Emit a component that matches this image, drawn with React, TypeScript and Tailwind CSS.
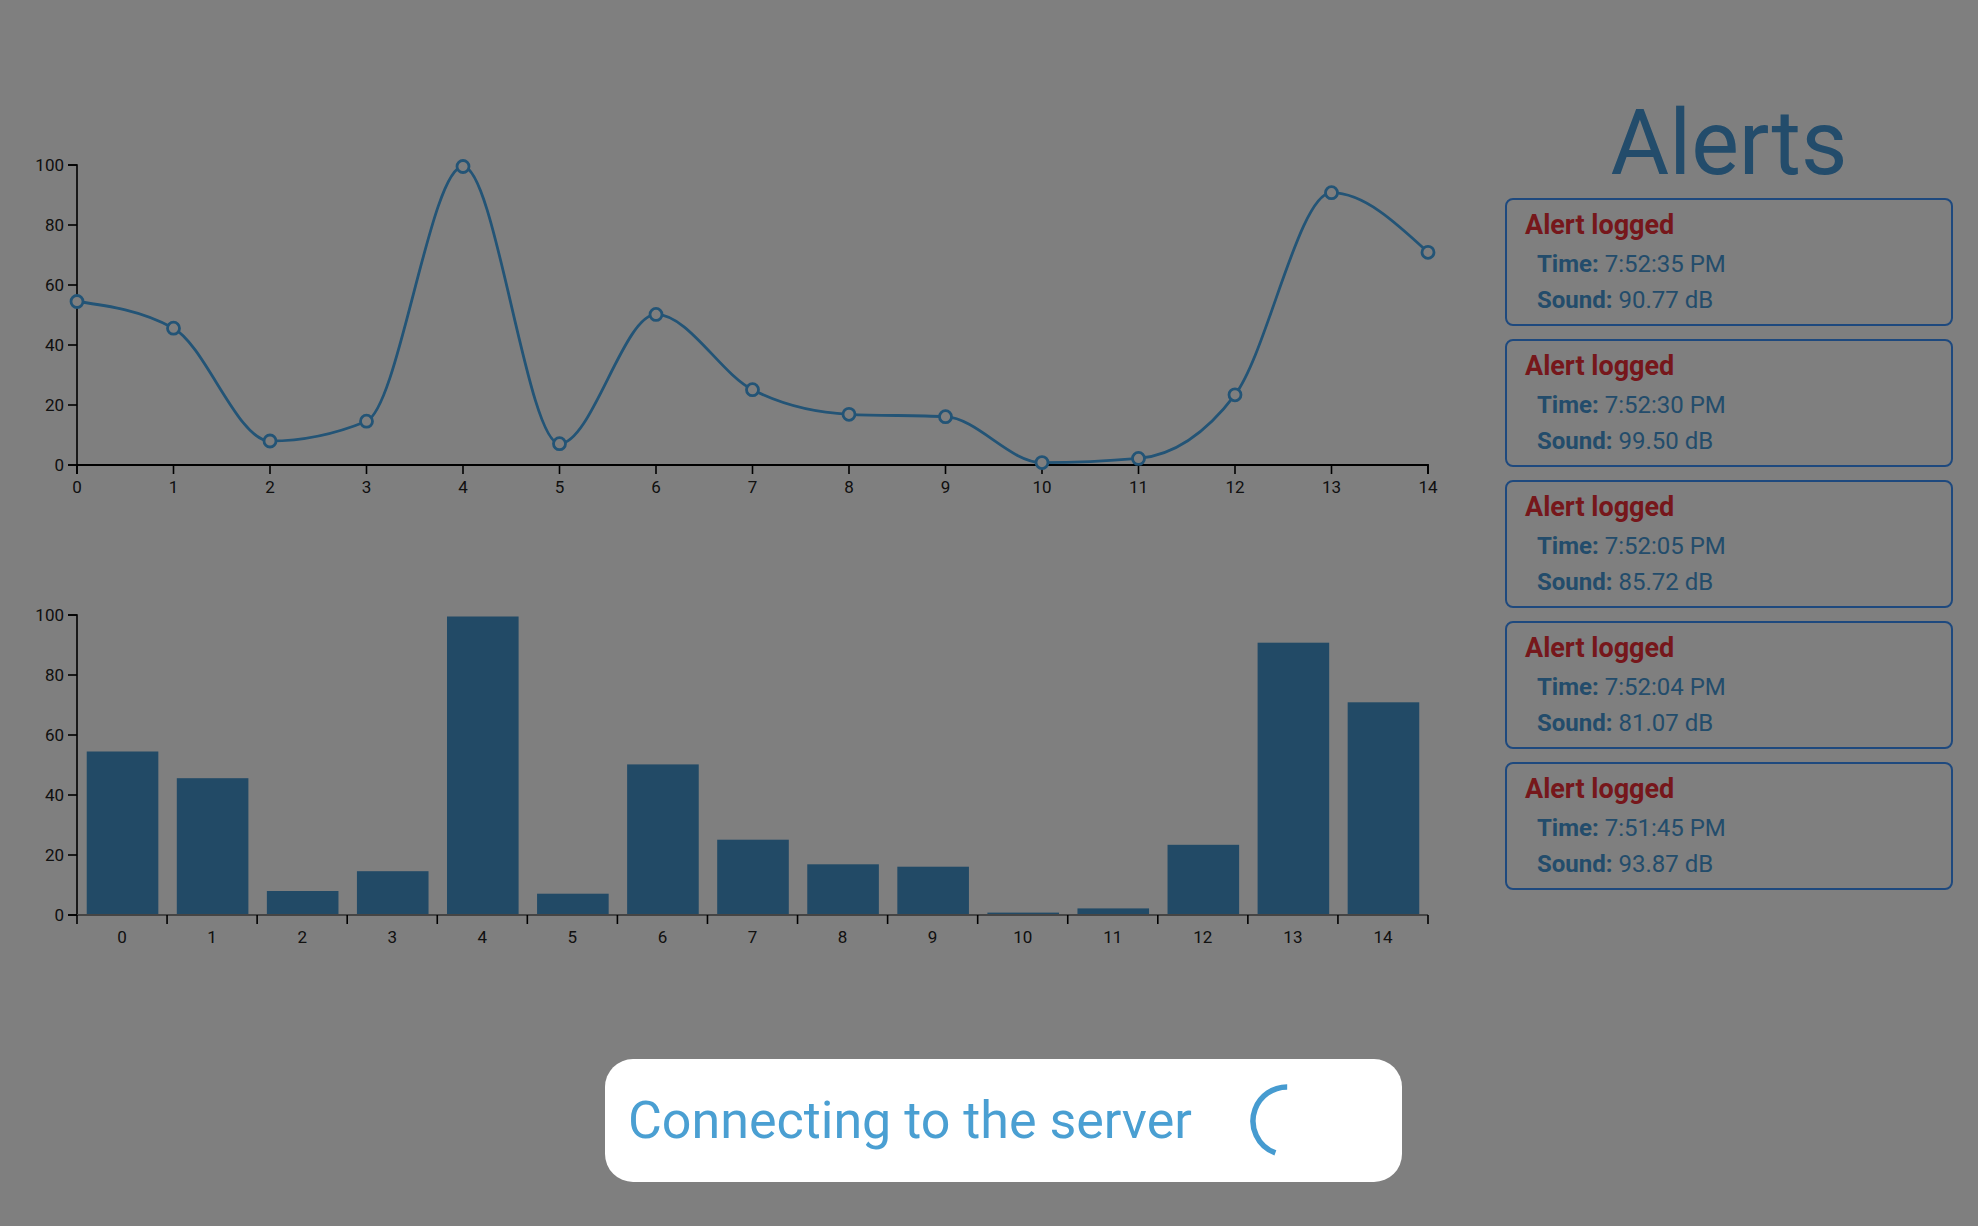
import React from 'react'

const values = [54.5, 45.6, 8.0, 14.6, 99.5, 7.1, 50.2, 25.1, 16.9, 16.1, 0.8, 2.2, 23.4, 90.77, 70.9]

const alerts = [
  { time: '7:52:35 PM', sound: '90.77' },
  { time: '7:52:30 PM', sound: '99.50' },
  { time: '7:52:05 PM', sound: '85.72' },
  { time: '7:52:04 PM', sound: '81.07' },
  { time: '7:51:45 PM', sound: '93.87' },
]

const FONT = 'Roboto, "Noto Sans", sans-serif'
const LEFT = 77
const RIGHT = 1428
const TICKS = [0, 20, 40, 60, 80, 100]

// same maths as d3.curveMonotoneX
function monotonePath(pts: [number, number][]) {
  const n = pts.length
  const t: number[] = new Array(n).fill(0)
  const sign = (x: number) => (x < 0 ? -1 : 1)
  for (let i = 1; i < n - 1; i++) {
    const h0 = pts[i][0] - pts[i - 1][0]
    const h1 = pts[i + 1][0] - pts[i][0]
    const s0 = (pts[i][1] - pts[i - 1][1]) / h0
    const s1 = (pts[i + 1][1] - pts[i][1]) / h1
    const p = (s0 * h1 + s1 * h0) / (h0 + h1)
    t[i] = (sign(s0) + sign(s1)) * Math.min(Math.abs(s0), Math.abs(s1), 0.5 * Math.abs(p)) || 0
  }
  t[0] = ((3 * (pts[1][1] - pts[0][1])) / (pts[1][0] - pts[0][0]) - t[1]) / 2
  t[n - 1] = ((3 * (pts[n - 1][1] - pts[n - 2][1])) / (pts[n - 1][0] - pts[n - 2][0]) - t[n - 2]) / 2
  let d = `M${pts[0][0]},${pts[0][1]}`
  for (let i = 0; i < n - 1; i++) {
    const [x0, y0] = pts[i]
    const [x1, y1] = pts[i + 1]
    const dx = (x1 - x0) / 3
    d += `C${x0 + dx},${y0 + dx * t[i]},${x1 - dx},${y1 - dx * t[i + 1]},${x1},${y1}`
  }
  return d
}

function YAxis({ top, bottom }: { top: number; bottom: number }) {
  const scale = (v: number) => bottom - ((bottom - top) * v) / 100
  return (
    <g>
      <path d={`M${LEFT - 9},${top}H${LEFT}V${bottom}H${LEFT - 9}`} fill="none" stroke="#000" strokeWidth={1.6} />
      {TICKS.map(v => (
        <g key={v}>
          <line x1={LEFT - 9} x2={LEFT} y1={scale(v)} y2={scale(v)} stroke="#000" strokeWidth={1.6} />
          <text x={LEFT - 13} y={scale(v)} dy="0.34em" textAnchor="end" fontSize={17} fill="#222" fontFamily={FONT}>
            {v}
          </text>
        </g>
      ))}
    </g>
  )
}

function LineChart() {
  const top = 35
  const bottom = 335
  const step = (RIGHT - LEFT) / 14
  const pts: [number, number][] = values.map((v, i) => [LEFT + i * step, bottom - 3 * v])
  return (
    <svg width={1480} height={380} className="block">
      <YAxis top={top} bottom={bottom} />
      <path d={`M${LEFT},${bottom + 9}V${bottom}H${RIGHT}V${bottom + 9}`} fill="none" stroke="#000" strokeWidth={1.8} />
      {values.map((_, i) => (
        <g key={i}>
          <line x1={LEFT + i * step} x2={LEFT + i * step} y1={bottom} y2={bottom + 9} stroke="#000" strokeWidth={1.6} />
          <text x={LEFT + i * step} y={bottom + 28} textAnchor="middle" fontSize={17} fill="#222" fontFamily={FONT}>
            {i}
          </text>
        </g>
      ))}
      <path d={monotonePath(pts)} fill="none" stroke="#46a8ec" strokeWidth={2.8} />
      {pts.map(([x, y], i) => (
        <circle key={i} cx={x} cy={y} r={6} fill="#fff" stroke="#46a8ec" strokeWidth={2.8} />
      ))}
    </svg>
  )
}

function BarChart() {
  const top = 25
  const bottom = 325
  const band = (RIGHT - LEFT) / 15
  return (
    <svg width={1480} height={370} className="block">
      {values.map((v, i) => (
        <rect
          key={i}
          x={LEFT + i * band + band * 0.108}
          y={bottom - 3 * v}
          width={band * 0.795}
          height={3 * v}
          fill="#4494cc"
        />
      ))}
      <YAxis top={top} bottom={bottom} />
      <line x1={LEFT} x2={RIGHT} y1={bottom} y2={bottom} stroke="#8a8a8a" strokeWidth={2} />
      {Array.from({ length: 16 }).map((_, k) => (
        <line key={k} x1={LEFT + k * band} x2={LEFT + k * band} y1={bottom} y2={bottom + 9} stroke="#000" strokeWidth={1.6} />
      ))}
      {values.map((_, i) => (
        <text key={i} x={LEFT + (i + 0.5) * band} y={bottom + 28} textAnchor="middle" fontSize={17} fill="#222" fontFamily={FONT}>
          {i}
        </text>
      ))}
    </svg>
  )
}

function AlertCard({ time, sound }: { time: string; sound: string }) {
  return (
    <div className="h-[128px] border-2 border-[#3d93fd] rounded-lg pl-[18px] pt-[10px]">
      <div className="text-[27px] leading-[30px] font-bold text-[#ec2e36]">Alert logged</div>
      <div className="mt-[6px] pl-[12px] text-[24px] leading-[36px] text-[#4699d6]">
        <div>
          <span className="font-bold">Time:</span> {time}
        </div>
        <div>
          <span className="font-bold">Sound:</span> {sound} dB
        </div>
      </div>
    </div>
  )
}

export default function App() {
  return (
    <div className="relative min-h-screen bg-white overflow-hidden" style={{ fontFamily: FONT }}>
      <div className="flex">
        <div className="flex-1 pt-[130px]">
          <LineChart />
          <div className="mt-[80px]">
            <BarChart />
          </div>
        </div>

        <div className="w-[498px] pt-[99px] px-[25px]">
          <h1 className="text-[90px] leading-[90px] text-center text-[#4699d6]">Alerts</h1>
          <div className="mt-[9px] flex flex-col gap-[13px]">
            {alerts.map(a => (
              <AlertCard key={a.time} time={a.time} sound={a.sound} />
            ))}
          </div>
        </div>
      </div>

      {/* overlay while the socket connects */}
      <div className="fixed inset-0 bg-black/50" />
      <div className="absolute left-[605px] top-[1059px] w-[797px] h-[123px] bg-white rounded-[28px] flex items-center pl-[23px]">
        <span className="w-[620px] text-[52px] leading-none text-[#4a9fd2]">Connecting to the server</span>
        <svg width={78} height={78} viewBox="0 0 78 78">
          <circle
            cx={39}
            cy={39}
            r={34}
            fill="none"
            stroke="#469bd0"
            strokeWidth={5.5}
            strokeDasharray={`${(160 / 360) * 2 * Math.PI * 34} 1000`}
            transform="rotate(110 39 39)"
          />
        </svg>
      </div>
    </div>
  )
}
